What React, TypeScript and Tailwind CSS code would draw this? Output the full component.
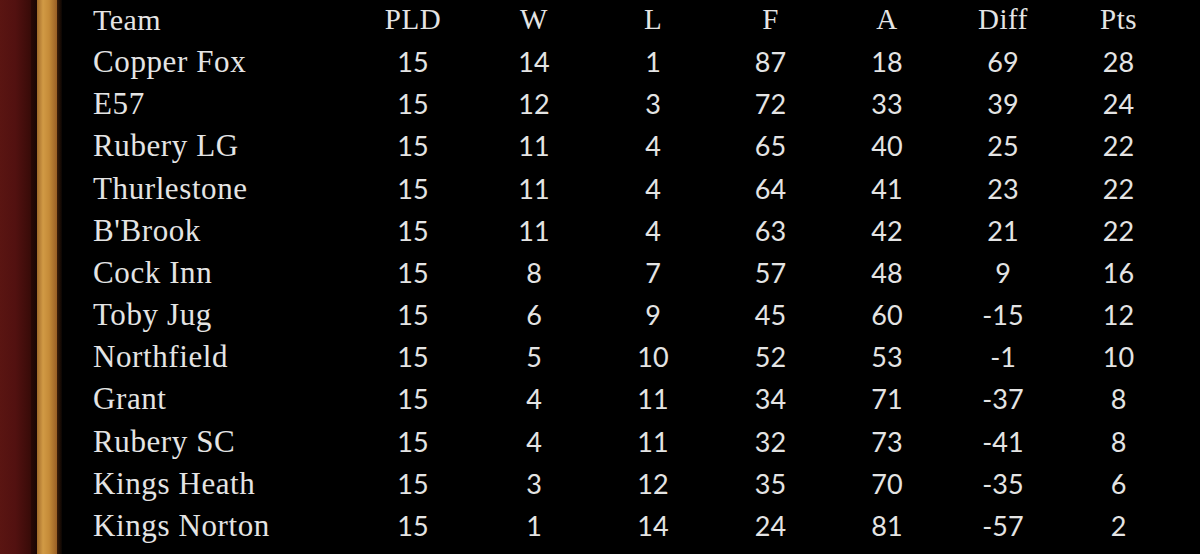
import React from "react";

const rows: [string, number, number, number, number, number, number, number][] = [
  ["Copper Fox", 15, 14, 1, 87, 18, 69, 28],
  ["E57", 15, 12, 3, 72, 33, 39, 24],
  ["Rubery LG", 15, 11, 4, 65, 40, 25, 22],
  ["Thurlestone", 15, 11, 4, 64, 41, 23, 22],
  ["B'Brook", 15, 11, 4, 63, 42, 21, 22],
  ["Cock Inn", 15, 8, 7, 57, 48, 9, 16],
  ["Toby Jug", 15, 6, 9, 45, 60, -15, 12],
  ["Northfield", 15, 5, 10, 52, 53, -1, 10],
  ["Grant", 15, 4, 11, 34, 71, -37, 8],
  ["Rubery SC", 15, 4, 11, 32, 73, -41, 8],
  ["Kings Heath", 15, 3, 12, 35, 70, -35, 6],
  ["Kings Norton", 15, 1, 14, 24, 81, -57, 2],
];

const headers = ["PLD", "W", "L", "F", "A", "Diff", "Pts"];

const grid =
  "grid grid-cols-[290px_122px_120px_118px_117px_116px_116px_115px] h-[42.17px] items-center";

export default function App() {
  return (
    <div className="w-[1200px] h-[554px] flex overflow-hidden bg-black">
      <div className="w-[31px] h-full bg-[linear-gradient(90deg,#5a1512_0%,#521110_50%,#380b08_100%)]" />
      <div className="w-[6px] h-full bg-[linear-gradient(90deg,#2a0806,#1a0604)]" />
      <div className="w-[20px] h-full bg-[linear-gradient(90deg,#a26a2a_0%,#d19a45_30%,#c58b38_60%,#9a5f25_100%)]" />
      <div className="w-[5px] h-full bg-[linear-gradient(90deg,#3a1c08,#0a0503)]" />
      <div
        className="flex-1 h-full text-[#e4e4e4] mt-[-3px]"
        style={{ fontFamily: '"Liberation Serif", "DejaVu Serif", serif' }}
      >
        <div className={grid}>
          <div className="pl-[31px] text-[30px] tracking-[0.5px]">Team</div>
          {headers.map((h) => (
            <div key={h} className="text-center text-[29px] tracking-[0.5px]">
              {h}
            </div>
          ))}
        </div>
        {rows.map((r) => (
          <div key={r[0]} className={grid}>
            <div className="pl-[31px] text-[31px] tracking-[0.6px]">{r[0]}</div>
            {r.slice(1).map((v, i) => (
              <div
                key={i}
                className="text-center text-[27px] font-normal"
                style={{ fontFamily: 'Lato, "Open Sans", sans-serif' }}
              >
                {v}
              </div>
            ))}
          </div>
        ))}
      </div>
    </div>
  );
}
